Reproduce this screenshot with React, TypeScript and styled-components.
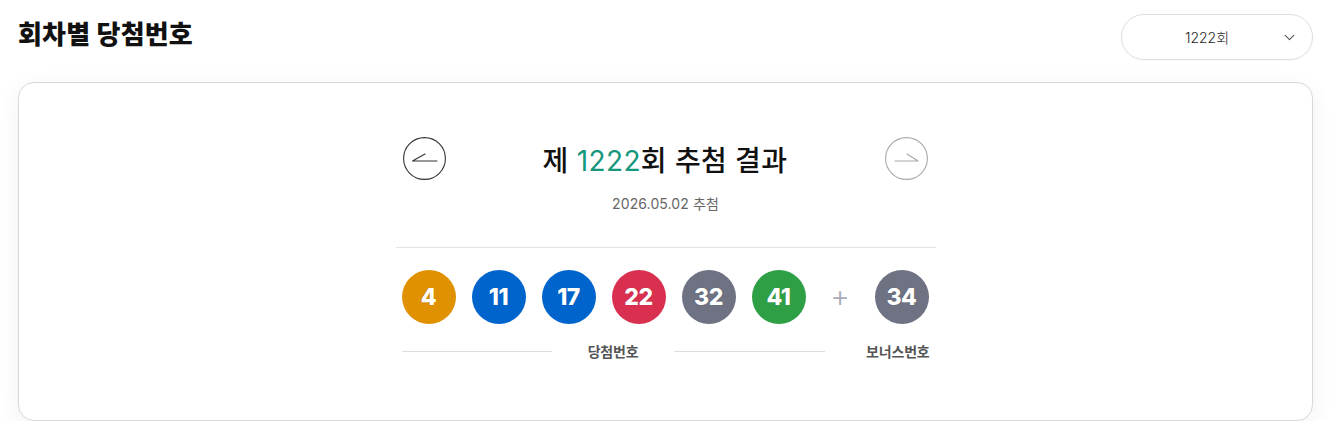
import styled, { createGlobalStyle } from "styled-components";
import { ChevronDown } from "lucide-react";

const GlobalStyle = createGlobalStyle`
  body {
    margin: 0;
    background: #ffffff;
    font-family: "Inter", "Noto Sans CJK KR", "Noto Sans", sans-serif;
    color: #111111;
  }
`;

const Page = styled.div`
  padding: 14px 18px 0 18px;
`;

const Header = styled.div`
  display: flex;
  justify-content: space-between;
  align-items: center;
  height: 46px;
`;

const Heading = styled.h1`
  margin: 0;
  font-family: "Noto Sans CJK KR", sans-serif;
  font-size: 26px;
  font-weight: 900;
  letter-spacing: 0.2px;
  color: #111111;
  line-height: 30px;
  margin-top: -8px;
`;

const Select = styled.div`
  position: relative;
  box-sizing: border-box;
  width: 192px;
  height: 46px;
  border: 1px solid #dedede;
  border-radius: 23px;
  display: flex;
  align-items: center;
  justify-content: center;
  padding-right: 20px;
  font-size: 14px;
  font-weight: 300;
  color: #222222;
  box-shadow: 0 1px 3px rgba(0, 0, 0, 0.03);

  svg {
    position: absolute;
    right: 14px;
    top: 14px;
    color: #555555;
  }
`;

const Card = styled.div`
  margin-top: 22px;
  border: 1px solid #d8d8d8;
  border-radius: 16px;
  box-shadow: 0 6px 24px rgba(0, 0, 0, 0.06);
  padding: 54px 0 60px;
  background: #ffffff;
`;

const Inner = styled.div`
  width: 540px;
  margin: 0 auto;
  display: flex;
  flex-direction: column;
`;

const NavRow = styled.div`
  display: flex;
  justify-content: space-between;
  align-items: center;
  padding: 0 8px 0 7px;
  height: 43px;
`;

const NavButton = styled.button<{ $disabled?: boolean }>`
  width: 43px;
  height: 43px;
  padding: 0;
  border: none;
  background: transparent;
  cursor: ${({ $disabled }) => ($disabled ? "default" : "pointer")};
  color: ${({ $disabled }) => ($disabled ? "#a8a8a8" : "#333333")};

  svg {
    display: block;
  }
`;

const Title = styled.h2`
  margin: 0;
  font-size: 28px;
  font-weight: 500;
  letter-spacing: 0.4px;
  color: #111111;

  em {
    font-style: normal;
    font-weight: 400;
    color: #15977d;
  }
`;

const DateText = styled.p`
  margin: 14px 0 0;
  text-align: center;
  font-size: 14px;
  line-height: 20px;
  color: #666666;
  letter-spacing: 0.1px;
`;

const Divider = styled.hr`
  margin: 33px 0 0;
  border: none;
  border-top: 1px solid #e4e4e4;
`;

const Balls = styled.div`
  display: flex;
  align-items: center;
  gap: 16px;
  margin-top: 22px;
  padding-left: 6px;
`;

const Ball = styled.span<{ $color: string }>`
  width: 54px;
  height: 54px;
  border-radius: 50%;
  background: ${({ $color }) => $color};
  display: flex;
  align-items: center;
  justify-content: center;
  color: #ffffff;
  font-family: "Inter", "Roboto", sans-serif;
  font-weight: 800;
  font-size: 23px;
  letter-spacing: -0.5px;
  text-shadow: 0 0 1px rgba(0, 0, 0, 0.25);
`;

const Plus = styled.span`
  width: 37px;
  text-align: center;
  font-family: "Inter", sans-serif;
  font-size: 30px;
  font-weight: 300;
  color: #a9acb6;
  line-height: 1;
  margin-top: -2px;
`;

const Labels = styled.div`
  display: flex;
  align-items: center;
  margin-top: 18px;
  padding: 0 6px;
  height: 18px;
`;

const MainLabel = styled.div`
  width: 423px;
  display: flex;
  align-items: center;

  &::before,
  &::after {
    content: "";
    flex: 1;
    border-top: 1px solid #dddddd;
  }
`;

const LabelText = styled.span<{ $pad?: boolean }>`
  font-family: "Noto Sans CJK KR", sans-serif;
  font-size: 14px;
  font-weight: 700;
  color: #555555;
  letter-spacing: -0.2px;
  padding: ${({ $pad }) => ($pad ? "0 36px" : "0")};
  margin-left: ${({ $pad }) => ($pad ? "0" : "auto")};
`;

const balls = [
  { n: 4, color: "#e09100" },
  { n: 11, color: "#0064cd" },
  { n: 17, color: "#0064cd" },
  { n: 22, color: "#da3050" },
  { n: 32, color: "#6e7282" },
  { n: 41, color: "#2e9f45" },
];

export default function App() {
  return (
    <Page>
      <GlobalStyle />
      <Header>
        <Heading>회차별 당첨번호</Heading>
        <Select>
          1222회
          <ChevronDown size={17} strokeWidth={1.6} />
        </Select>
      </Header>

      <Card>
        <Inner>
          <NavRow>
            <NavButton aria-label="이전 회차">
              <svg width="43" height="43" viewBox="0 0 43 43" fill="none" stroke="currentColor" strokeWidth="1.1">
                <circle cx="21.5" cy="21.5" r="20.9" />
                <path d="M34 24H9.5L22 17" strokeLinecap="round" strokeLinejoin="round" />
              </svg>
            </NavButton>
            <Title>
              제 <em>1222</em>회 추첨 결과
            </Title>
            <NavButton $disabled aria-label="다음 회차">
              <svg width="43" height="43" viewBox="0 0 43 43" fill="none" stroke="currentColor" strokeWidth="1.1">
                <circle cx="21.5" cy="21.5" r="20.9" />
                <path d="M10 24H33L22 17" strokeLinecap="round" strokeLinejoin="round" />
              </svg>
            </NavButton>
          </NavRow>

          <DateText>2026.05.02 추첨</DateText>
          <Divider />

          <Balls>
            {balls.map((b) => (
              <Ball key={b.n} $color={b.color}>
                {b.n}
              </Ball>
            ))}
            <Plus>+</Plus>
            <Ball $color="#6e7282">34</Ball>
          </Balls>

          <Labels>
            <MainLabel>
              <LabelText $pad>당첨번호</LabelText>
            </MainLabel>
            <LabelText>보너스번호</LabelText>
          </Labels>
        </Inner>
      </Card>
    </Page>
  );
}
